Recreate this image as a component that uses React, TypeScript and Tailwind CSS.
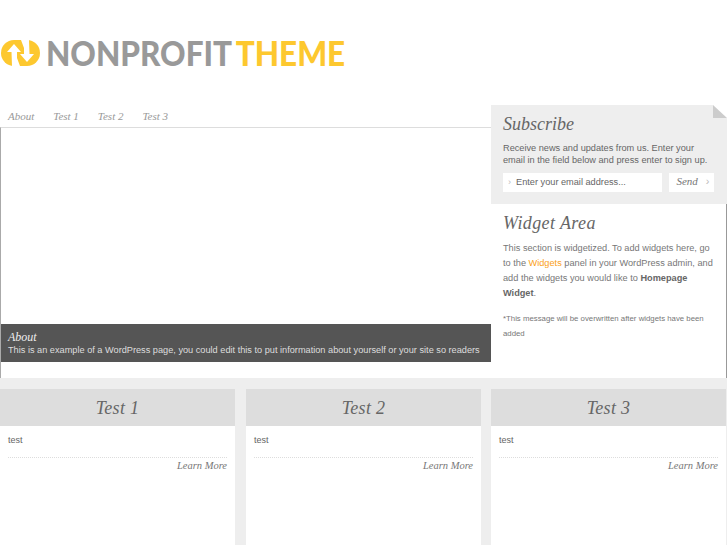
const navItems = ["About", "Test 1", "Test 2", "Test 3"];

const cards = [
  { title: "Test 1", className: "" },
  { title: "Test 2", className: "ml-[11px]" },
  { title: "Test 3", className: "ml-[10px]" },
];

function Logo() {
  return (
    <svg width="40" height="26" viewBox="0 0 40 26" className="ml-px shrink-0">
      <rect x="0" y="0" width="39" height="26" rx="13" fill="#fdc82f" />
      <path d="M13 4 L20 12 L16 12 L16 18 L19 26 L11 26 L10.5 12 L6 12 Z" fill="#fff" />
      <path d="M26 22 L19 14 L23 14 L23 8 L20 0 L28 0 L28.5 14 L33 14 Z" fill="#fff" />
    </svg>
  );
}

function Subscribe() {
  return (
    <div className="relative h-[99px] bg-[#eeeeee] pl-3 pr-[13px] pt-[8px]">
      <div className="absolute right-0 top-0 h-0 w-0 border-b-[13px] border-r-[14px] border-b-[#cccccc] border-r-white" />
      <h2 className="font-['Liberation_Serif',serif] text-[18px] italic leading-[22px] text-[#666666]">Subscribe</h2>
      <p className="mt-[7px] text-[9.2px] leading-[12px] text-[#666666]">
        Receive news and updates from us. Enter your
        <br />
        email in the field below and press enter to sign up.
      </p>
      <div className="mt-[7px] flex h-[19px] justify-between">
        <div className="flex w-[159px] items-center bg-white pl-[5px] text-[9.2px] text-[#666666]">
          <span className="mr-[5px] text-[#bbbbbb]">›</span>
          Enter your email address...
        </div>
        <div className="flex w-[45px] items-center justify-center gap-[8px] bg-white pb-[2px] pl-[3px] font-['Liberation_Serif',serif] text-[11px] italic text-[#777777]">
          Send
          <span className="font-['Liberation_Sans',sans-serif] not-italic text-[#bbbbbb]">›</span>
        </div>
      </div>
    </div>
  );
}

function WidgetArea() {
  return (
    <div className="flex-1 border-r border-r-[#999999] pl-3 pr-[13px] pt-[8px]">
      <h2 className="font-['Liberation_Serif',serif] text-[18px] italic leading-[22px] tracking-[0.4px] text-[#666666]">Widget Area</h2>
      <p className="mt-[7px] text-[9.2px] leading-[15px] text-[#777777]">
        This section is widgetized. To add widgets here, go to the <span className="text-[#fb9f1a]">Widgets</span> panel in your WordPress admin, and add the widgets you would like to <b className="text-[#666666]">Homepage Widget</b>.
      </p>
      <p className="mt-[10px] text-[7.8px] leading-[15px] text-[#777777]">*This message will be overwritten after widgets have been added</p>
    </div>
  );
}

export default function App() {
  return (
    <div className="h-[545px] w-[727px] overflow-hidden bg-white font-['Liberation_Sans',sans-serif]">
      <header className="flex h-[105px] items-start pt-[40px]">
        <Logo />
        <div className="ml-[5px] origin-left scale-x-[0.9] whitespace-nowrap font-['Lato',sans-serif] text-[35px] font-black leading-[25px]">
          <span className="text-[#999999]">NONPROFIT</span>
          <span className="ml-[4px] text-[#fdc82f]">THEME</span>
        </div>
      </header>

      <div className="flex h-[273px]">
        <div className="flex w-[491px] flex-col">
          <nav className="flex h-[22px] items-center gap-[19px] pl-2 font-['Liberation_Serif',serif] text-[11px] italic text-[#999999]">
            {navItems.map((item) => (
              <a key={item}>{item}</a>
            ))}
          </nav>
          <div className="flex flex-1 flex-col border-l border-t border-l-[#aaaaaa] border-t-[#dddddd] pb-[16px]">
            <div className="mt-auto h-[38px] bg-[#555555] pl-[7px] pt-[7px] text-[#dddddd]">
              <h3 className="font-['Liberation_Serif',serif] text-[12px] italic leading-[13px] text-[#eeeeee]">About</h3>
              <p className="text-[9.2px] leading-[13px]">This is an example of a WordPress page, you could edit this to put information about yourself or your site so readers</p>
            </div>
          </div>
        </div>
        <aside className="flex w-[236px] flex-col">
          <Subscribe />
          <WidgetArea />
        </aside>
      </div>

      <div className="flex h-[167px] bg-[#eeeeee] pt-[11px]">
        {cards.map((card) => (
          <div key={card.title} className={`h-full w-[235px] bg-white ${card.className}`}>
            <h2 className="flex h-[37px] items-center justify-center bg-[#dddddd] pt-px font-['Liberation_Serif',serif] text-[18px] italic tracking-[0.3px] text-[#666666]">
              {card.title}
            </h2>
            <div className="px-2">
              <p className="border-b border-dotted border-b-[#dddddd] pb-[10px] pt-[8px] text-[9px] leading-[13px] text-[#666666]">test</p>
              <a className="block text-right font-['Liberation_Serif',serif] text-[10.5px] italic text-[#777777]">Learn More</a>
            </div>
          </div>
        ))}
      </div>
    </div>
  );
}
